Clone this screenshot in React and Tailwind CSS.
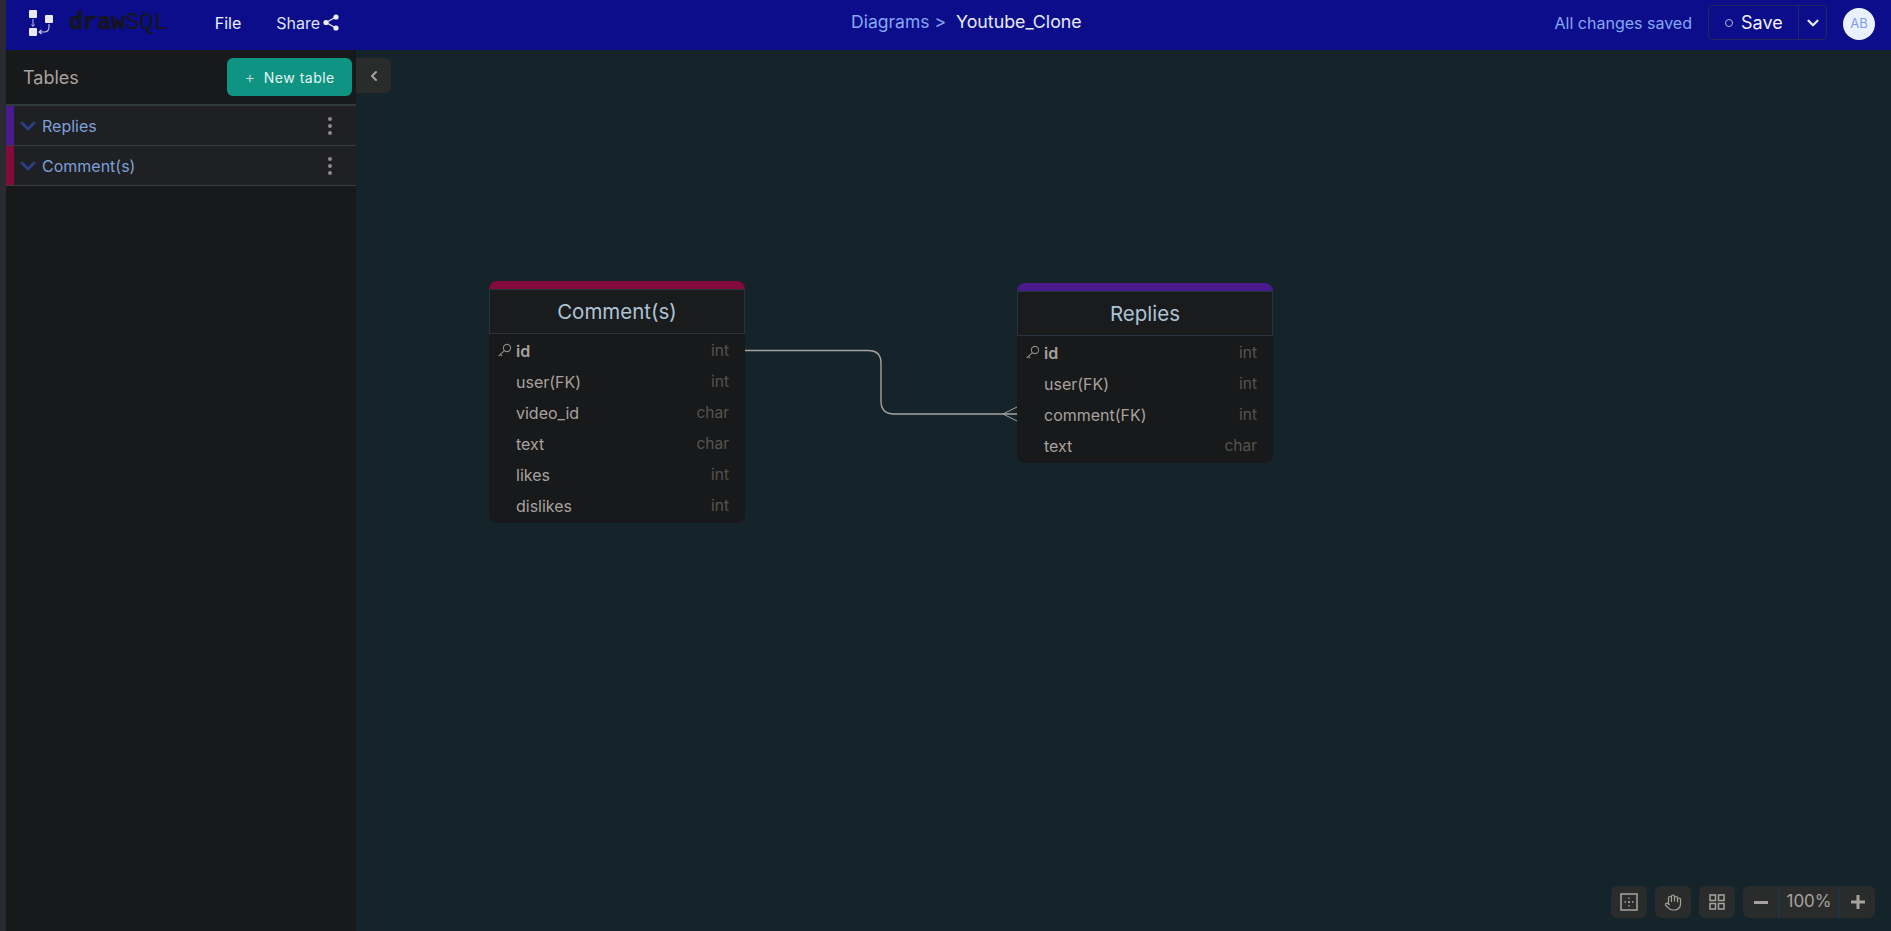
import React from "react";

const font = { fontFamily: "Inter, 'Noto Sans', sans-serif" };

function Logo() {
  return (
    <svg width="26" height="28" viewBox="0 0 26 28" fill="none" className="shrink-0">
      <rect x="0" y="1" width="8" height="8" rx="1" fill="#e8e8ee" />
      <rect x="16" y="6" width="8" height="8" rx="1" fill="#e8e8ee" />
      <rect x="0" y="19" width="8" height="8" rx="1" fill="#e8e8ee" />
      <path d="M4 10V17M2.5 15.5L4 17.5L5.5 15.5" stroke="#b9bce8" strokeWidth="1" />
      <path d="M20 15V18Q20 23 15 23H10M12.5 21L10 23L12.5 25" stroke="#c9cbee" strokeWidth="1.1" />
    </svg>
  );
}

function Chevron({ className, d = "M6 9l6 6 6-6", w = 3 }) {
  return (
    <svg viewBox="0 0 24 24" fill="none" stroke="currentColor" strokeWidth={w} strokeLinecap="round" strokeLinejoin="round" className={className}>
      <path d={d} />
    </svg>
  );
}

function Key() {
  return (
    <svg width="15" height="15" viewBox="0 0 15 15" fill="none" stroke="#8f8a84" strokeWidth="1.1" className="absolute left-[8px] top-[8px]">
      <circle cx="10" cy="5" r="3.6" />
      <path d="M7.4 7.6L1.6 13.2M3.4 11.4L5 13" />
    </svg>
  );
}

function Row({ name, type, pk, boldPart, pre }) {
  return (
    <div className="relative h-[31px] flex items-center justify-between pl-[27px] pr-[16px] text-[16px] text-[#a8a29e]">
      {pk && <Key />}
      <span className={pk ? "font-semibold" : ""}>
        {name}
        {pre}
        {boldPart}
      </span>
      <span className="text-[15.5px] text-[#57534e]">{type}</span>
    </div>
  );
}

function TableNode({ title, color, rows, pos }) {
  return (
    <div className={`absolute w-[256px] rounded-lg overflow-hidden bg-[#18191b] ${pos}`}>
      <div className="h-[8px]" style={{ background: color }} />
      <div className="h-[45px] pt-[2px] flex items-center justify-center text-[20.5px] text-[#adc3d4] bg-[#1a1b1d] border border-[#273341]">{title}</div>
      <div className="pt-[1px] pb-[2px]">
        {rows.map((r, i) => <Row key={i} {...r} />)}
      </div>
    </div>
  );
}

function SidebarItem({ name, color }) {
  return (
    <div className="flex h-[40px] items-center bg-[#1e2023] border-b border-[#3a3b3c]">
      <div className="w-[8px] h-full shrink-0" style={{ background: color }} />
      <Chevron className="w-[24px] h-[24px] ml-[2px] text-[#2c3e86]" />
      <span className="ml-[2px] text-[16px] text-[#7f9fd6]">{name}</span>
      <div className="ml-auto mr-[24px] flex flex-col gap-[3px]">
        <span className="w-[4px] h-[4px] rounded-full bg-[#8f8a84]" />
        <span className="w-[4px] h-[4px] rounded-full bg-[#8f8a84]" />
        <span className="w-[4px] h-[4px] rounded-full bg-[#8f8a84]" />
      </div>
    </div>
  );
}

function Tool({ children }) {
  return <div className="w-[36px] h-[32px] rounded-md bg-[#2a2c2c] flex items-center justify-center">{children}</div>;
}

export default function App() {
  const comment = [
    { name: "id", type: "int", pk: true },
    { pre: "user", boldPart: "(FK)", type: "int" },
    { name: "video_id", type: "char" },
    { name: "text", type: "char" },
    { name: "likes", type: "int" },
    { name: "dislikes", type: "int" },
  ];
  const replies = [
    { name: "id", type: "int", pk: true },
    { pre: "user", boldPart: "(FK)", type: "int" },
    { pre: "comment", boldPart: "(FK)", type: "int" },
    { name: "text", type: "char" },
  ];
  return (
    <div className="flex h-[931px] w-full overflow-hidden bg-[#15242b]" style={font}>
      <div className="w-[6px] shrink-0 bg-[#2a2a33]" />
      <div className="flex-1 flex flex-col min-w-0">
        <header className="relative h-[50px] shrink-0 bg-[#0c0d8a] flex items-center pl-[23px] pr-[16px] pb-[5px]">
          <Logo />
          <div className="ml-[14px] text-[23.5px] leading-none text-[#15151c]" style={{ fontFamily: "'Liberation Mono', monospace" }}>
            <span className="font-bold [-webkit-text-stroke:0.6px_#15151c]">draw</span><span>SQL</span>
          </div>
          <span className="ml-[47px] text-[16px] text-[#eef0fb]">File</span>
          <div className="ml-[35px] flex items-center gap-[3px] text-[16px] text-[#dfe3fb]">
            Share
            <svg width="16" height="17" viewBox="0 0 16 17" fill="#eef0fb">
              <circle cx="13" cy="3" r="2.6" />
              <circle cx="3" cy="8.5" r="2.6" />
              <circle cx="13" cy="14" r="2.6" />
              <path d="M3 8.5L13 3M3 8.5L13 14" stroke="#eef0fb" strokeWidth="1.4" />
            </svg>
          </div>
          <div className="ml-[512px] flex items-center">
            <span className="text-[17.5px] text-[#86a8f5]">Diagrams &gt;</span>
            <span className="ml-[10px] text-[17.8px] text-[#e8eaf8]">Youtube_Clone</span>
          </div>
          <span className="ml-auto text-[16px] text-[#86a8f5]">All changes saved</span>
          <div className="ml-[16px] h-[35px] w-[119px] flex items-center rounded border border-[#25265e]">
            <div className="flex-1 flex items-center pl-[16px]">
              <span className="w-[8px] h-[8px] rounded-full border border-[#b3b5dc]" />
              <span className="ml-[8px] text-[18px] text-[#f0f1fb]">Save</span>
            </div>
            <div className="w-[28px] h-full flex items-center justify-center border-l border-[#25265e]">
              <Chevron className="w-[18px] h-[18px] text-[#e8eaf8]" />
            </div>
          </div>
          <div className="ml-[16px] mt-[2px] w-[32px] h-[32px] rounded-full bg-[#ebf2ff] flex items-center justify-center text-[13px] text-[#7f9cf5]">AB</div>
        </header>
        <div className="flex-1 flex min-h-0">
          <aside className="w-[350px] shrink-0 bg-[#18191b] flex flex-col">
            <div className="h-[56px] shrink-0 flex items-center justify-between pl-[17px] pr-[4px] border-b-2 border-[#2f3a3a]">
              <span className="text-[18px] text-[#a8a29e]">Tables</span>
              <button className="w-[125px] h-[38px] rounded-md bg-[#0f9484] flex items-center justify-center gap-[8px] text-[14px] tracking-[0.5px] text-[#e7f5f2]">
                <span className="text-[17px] leading-none text-[#c9d6d2] font-light">+</span>
                New table
              </button>
            </div>
            <SidebarItem name="Replies" color="#481a8c" />
            <SidebarItem name="Comment(s)" color="#850a3c" />
          </aside>
          <main className="relative flex-1 min-w-0">
            <div className="absolute left-0 top-[8px] w-[35px] h-[35px] rounded-r-md bg-[#2a2c2c] flex items-center justify-center">
              <Chevron className="w-[16px] h-[16px] text-[#a8a29e]" d="M15 18l-6-6 6-6" />
            </div>
            <svg className="absolute left-[380px] top-[280px]" width="300" height="100" fill="none">
              <path d="M9 20.5H132Q145 20.5 145 33V71Q145 84 158 84H281" stroke="#a8a29e" strokeWidth="1.4" />
              <path d="M281 77L267 84L281 91" stroke="#a8a29e" strokeWidth="1" />
            </svg>
            <TableNode title="Comment(s)" color="#850a3c" rows={comment} pos="left-[133px] top-[231px]" />
            <TableNode title="Replies" color="#481a8c" rows={replies} pos="left-[661px] top-[233px]" />
            <div className="absolute right-[16px] bottom-[13px] flex items-center gap-[8px]">
              <Tool>
                <svg width="18" height="18" viewBox="0 0 18 18" fill="none" stroke="#a8a29e">
                  <rect x="1" y="1" width="16" height="16" strokeWidth="1.5" />
                  <path d="M9 4.5v1.5M9 8v2M9 12v1.5M4.5 9H6M8 9h2M12 9h1.5" strokeWidth="1.3" />
                </svg>
              </Tool>
              <Tool>
                <svg width="18" height="19" viewBox="0 0 24 24" fill="none" stroke="#a8a29e" strokeWidth="1.6" strokeLinecap="round" strokeLinejoin="round">
                  <path d="M18 11V6a2 2 0 0 0-4 0M14 10V4a2 2 0 0 0-4 0v2M10 10.5V6a2 2 0 0 0-4 0v8" />
                  <path d="M18 8a2 2 0 1 1 4 0v6a8 8 0 0 1-8 8h-2c-2.8 0-4.5-.9-6-2.4L2.4 16a2 2 0 0 1 2.8-2.8L7 15" />
                </svg>
              </Tool>
              <Tool>
                <svg width="16" height="16" viewBox="0 0 16 16" fill="none" stroke="#a8a29e" strokeWidth="1.5">
                  <rect x="1" y="1" width="5.5" height="5.5" />
                  <rect x="9.5" y="1" width="5.5" height="5.5" />
                  <rect x="1" y="9.5" width="5.5" height="5.5" />
                  <rect x="9.5" y="9.5" width="5.5" height="5.5" />
                </svg>
              </Tool>
              <div className="h-[32px] w-[132px] rounded-md bg-[#2a2c2c] flex items-center text-[#a8a29e]">
                <div className="w-[37px] h-full flex items-center justify-center border-r-2 border-[#1f3347]">
                  <span className="w-[14px] h-[3px] bg-[#a8a29e]" />
                </div>
                <div className="flex-1 text-center text-[17px]">100%</div>
                <div className="w-[37px] h-full flex items-center justify-center border-l-2 border-[#1f3347]">
                  <svg width="14" height="14" viewBox="0 0 14 14" fill="#a8a29e"><path d="M5.5 0h3v5.5H14v3H8.5V14h-3V8.5H0v-3h5.5z" /></svg>
                </div>
              </div>
            </div>
          </main>
        </div>
      </div>
    </div>
  );
}
